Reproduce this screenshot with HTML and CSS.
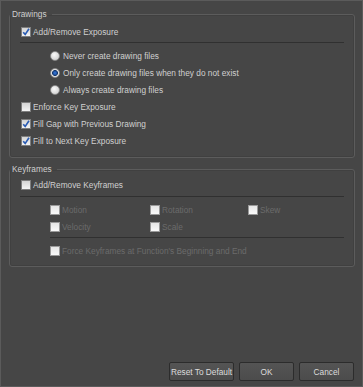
FILE: index.html
```html
<html>
	<head>
		<meta charset="utf-8" />
		<title>Preferences</title>
		<link rel="stylesheet" href="styles.css">
	</head>
	<body>
		<div class="content">
			<fieldset class="group">
				<legend>Drawings</legend>
				<label class="row"><span class="check on"><svg viewBox="0 0 8 8"><path d="M1.2 4.2 L3.2 6.4 L7 0.8" /></svg></span>Add/Remove Exposure</label>
				<div class="sep"></div>
				<div class="options">
					<label class="row"><span class="radio"></span>Never create drawing files</label>
					<label class="row"><span class="radio on"></span>Only create drawing files when they do not exist</label>
					<label class="row"><span class="radio"></span>Always create drawing files</label>
				</div>
				<label class="row"><span class="check"></span>Enforce Key Exposure</label>
				<label class="row"><span class="check on"><svg viewBox="0 0 8 8"><path d="M1.2 4.2 L3.2 6.4 L7 0.8" /></svg></span>Fill Gap with Previous Drawing</label>
				<label class="row"><span class="check on"><svg viewBox="0 0 8 8"><path d="M1.2 4.2 L3.2 6.4 L7 0.8" /></svg></span>Fill to Next Key Exposure</label>
			</fieldset>
			<fieldset class="group keys">
				<legend>Keyframes</legend>
				<label class="row"><span class="check"></span>Add/Remove Keyframes</label>
				<div class="sep"></div>
				<div class="key-grid disabled">
					<label class="row"><span class="check"></span>Motion</label>
					<label class="row"><span class="check"></span>Rotation</label>
					<label class="row"><span class="check"></span>Skew</label>
					<label class="row"><span class="check"></span>Velocity</label>
					<label class="row"><span class="check"></span>Scale</label>
				</div>
				<div class="sep sub"></div>
				<div class="options disabled">
					<label class="row"><span class="check"></span>Force Keyframes at Function's Beginning and End</label>
				</div>
			</fieldset>
		</div>
		<div class="buttons">
			<button class="btn wide" type="button">Reset To Default</button>
			<button class="btn" type="button">OK</button>
			<button class="btn" type="button">Cancel</button>
		</div>
	</body>
</html>
```
FILE: styles.css
```css
body { margin: 0; height: 387px; box-sizing: border-box; border: 1px solid #5b5b5b; background-color: #464646; font-family: "Liberation Sans", Arial, sans-serif; font-size: 8.3px; color: #d0d0d0; display: flex; flex-direction: column; }
.content { flex: 1; padding: 8px 7px 0 8px; }

.group { margin: 0; padding: 4px 0 8px 0; border: 1px solid #5c5c5c; border-radius: 3px; min-width: 0; box-shadow: inset 0 0 0 1px #404040; }
.group legend { margin: 0; padding: 0 5px 0 2px; line-height: 10px; }
.keys { margin-top: 6px; padding-top: 2px; padding-bottom: 7px; }

.row { display: flex; align-items: center; height: 17px; padding-left: 11px; white-space: nowrap; }
.options .row { padding-left: 40px; }
.sep { border-top: 1px solid #303030; margin: 2px 10px 4px 10px; }
.keys .sep { margin-top: 3px; }
.keys .sep.sub { margin: 2px 10px 4px 40px; }

.check { width: 8px; height: 8px; border: 1px solid #7e7e7e; background: linear-gradient(#d4d4d4, #f4f4f4); margin-right: 2px; flex: none; }
.check svg { display: block; width: 8px; height: 8px; }
.check path { fill: none; stroke: #2a5cb4; stroke-width: 1.6; }
.radio { width: 10px; height: 10px; box-sizing: border-box; border-radius: 50%; border: 1px solid #8a8a8a; background: radial-gradient(circle at 40% 35%, #fafafa, #c8c8c8); margin-right: 3px; flex: none; }
.radio.on { background: radial-gradient(circle, #3a7ad8 0, #2159b0 1.5px, #18386a 2.6px, #e4e4e4 3.3px); }

.key-grid { display: grid; grid-template-columns: 100px 98px auto; padding-left: 29px; }
.disabled { color: #6b6b6b; }
.disabled .check { background: linear-gradient(#e6e6e6, #fafafa); border-color: #9a9a9a; }

.buttons { display: flex; justify-content: flex-end; gap: 5px; padding: 0 8px 5px 0; }
.btn { width: 55px; height: 19px; padding: 0; border: 1px solid #2c2c2c; border-radius: 2px; background: linear-gradient(#545454, #4c4c4c); color: #dcdcdc; font-family: inherit; font-size: 8.3px; }
.btn.wide { width: 65px; }
```
